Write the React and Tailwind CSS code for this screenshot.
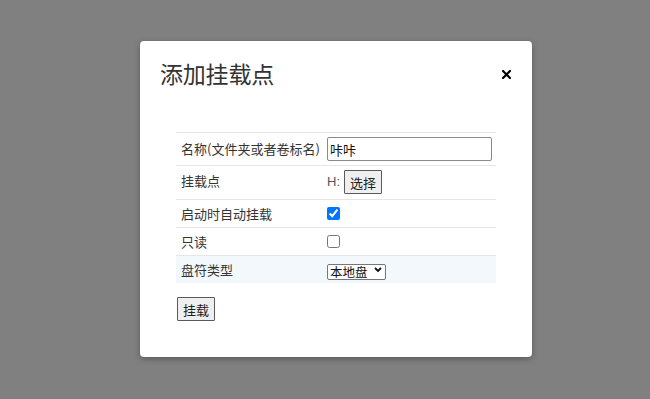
import React from "react";

export default function App() {
  const font = "font-['Noto_Sans_CJK_SC','Noto_Sans',sans-serif]";
  return (
    <div className={`w-[650px] h-[399px] bg-[#808080] pt-[41px] pl-[140px] overflow-hidden ${font}`}>
      <div className="w-[392px] h-[316px] bg-white rounded-[4px] shadow-[0_2px_6px_rgba(0,0,0,0.3)] flex flex-col">
        <div className="flex items-center justify-between pt-[16px] pl-[20px] pr-[21px]">
          <h4 className="text-[23px] leading-[32px] text-[#333] tracking-[-0.2px]">添加挂载点</h4>
          <svg width="9" height="9" viewBox="0 0 9 9" className="mt-[2px]">
            <path d="M1 1 L8 8 M8 1 L1 8" stroke="#000" strokeWidth="2.2" strokeLinecap="square" />
          </svg>
        </div>
        <div className="px-[36px] pt-[43px]">
          <div className="text-[13px] text-[#333]">
            <div className="grid grid-cols-[146px_1fr] border-t border-[#e6e6e6] h-[33px]">
              <div className="pl-[5px] flex items-center leading-[18px]">名称(文件夹或者卷标名)</div>
              <div className="pl-[5px] pr-[4px] flex items-center">
                <input
                  type="text"
                  defaultValue="咔咔"
                  className="w-full h-[24px] border border-[#8a8a8a] rounded-[2px] px-[2px] text-[13px] text-[#111] bg-white outline-none"
                />
              </div>
            </div>
            <div className="grid grid-cols-[146px_1fr] border-t border-[#e6e6e6] h-[34px]">
              <div className="pl-[5px] flex items-center leading-[18px] pb-[3px]">挂载点</div>
              <div className="pl-[5px] flex items-center pb-[1px] gap-[4px]">
                <span className="font-['Liberation_Sans',sans-serif] text-[#555] text-[13px]">H:</span>
                <button className="h-[24px] w-[38px] border border-[#5a5a5a] bg-[#efefef] text-[13px] text-[#222] leading-none rounded-[1px]">选择</button>
              </div>
            </div>
            <div className="grid grid-cols-[146px_1fr] border-t border-[#e6e6e6] h-[28px]">
              <div className="pl-[5px] flex items-center leading-[18px]">启动时自动挂载</div>
              <div className="pl-[5px] flex items-center">
                <input type="checkbox" defaultChecked className="w-[13px] h-[13px] m-0" />
              </div>
            </div>
            <div className="grid grid-cols-[146px_1fr] border-t border-[#e6e6e6] h-[28px]">
              <div className="pl-[5px] flex items-center leading-[18px]">只读</div>
              <div className="pl-[5px] flex items-center">
                <input type="checkbox" className="w-[13px] h-[13px] m-0" />
              </div>
            </div>
            <div className="grid grid-cols-[146px_1fr] border-t border-[#e6e6e6] h-[28px] bg-[#f3f8fc]">
              <div className="pl-[5px] flex items-center leading-[18px]">盘符类型</div>
              <div className="pl-[5px] flex items-center">
                <div className="relative w-[59px] h-[16px]">
                  <select className="appearance-none w-full h-full border border-[#767676] rounded-[2px] bg-white text-[12.5px] text-[#111] leading-[14px] py-0 pl-[2px] pr-[14px] overflow-hidden">
                    <option>本地盘</option>
                    <option>网络盘</option>
                  </select>
                  <svg width="8" height="6" viewBox="0 0 8 6" className="absolute right-[4px] top-[5px] pointer-events-none">
                    <path d="M1 1 L4 4 L7 1" stroke="#111" strokeWidth="1.8" fill="none" />
                  </svg>
                </div>
              </div>
            </div>
          </div>
          <button className="mt-[14px] ml-[1px] h-[24px] w-[38px] border border-[#5a5a5a] bg-[#efefef] text-[13px] text-[#222] leading-none rounded-[1px]">挂载</button>
        </div>
      </div>
    </div>
  );
}
